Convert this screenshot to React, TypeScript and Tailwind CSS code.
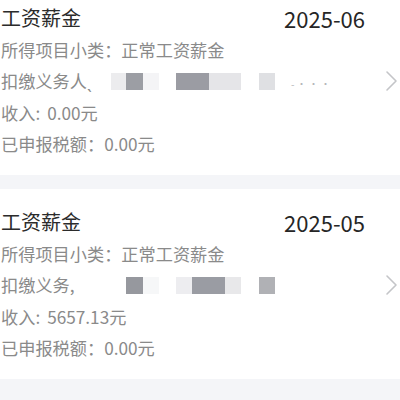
import React from "react";

type Block = { w: number; ml?: number; color: string };

interface RecordCardProps {
  title: string;
  period: string;
  subType: string;
  payer: string;
  blocks: Block[];
  tail?: string;
  income: string;
  declaredTax: string;
}

function Chevron() {
  return (
    <svg width="13" height="22" viewBox="0 0 13 22" className="shrink-0" fill="none">
      <path d="M2 2 L11 11 L2 20" stroke="#c4c5c8" strokeWidth="1.6" strokeLinecap="round" strokeLinejoin="round" />
    </svg>
  );
}

function RecordCard({ title, period, subType, payer, blocks, tail, income, declaredTax }: RecordCardProps) {
  return (
    <div className="bg-white h-[190px] pt-[17px] pl-[1px] flex flex-col">
      {/* title + period */}
      <div className="flex items-center justify-between h-[32px] pr-[35px]">
        <span className="text-[20px] text-[#2b2b2b]">{title}</span>
        <span className="text-[22px] text-[#262626]">{period}</span>
      </div>

      <div className="h-[31.5px] flex items-center text-[17.2px] text-[#8a8a8a]">所得项目小类：{subType}</div>

      {/* payer row with masked name */}
      <div className="h-[31.5px] flex items-center text-[17.2px] text-[#8a8a8a] pr-[2px]">
        <span className="w-[109px] shrink-0 whitespace-nowrap">{payer}</span>
        {blocks.map((b, i) => (
          <span
            key={i}
            className="h-[17px] shrink-0 inline-block"
            style={{ width: b.w, marginLeft: b.ml ?? 0, backgroundColor: b.color }}
          />
        ))}
        {tail && <span className="ml-[16px] text-[10px] leading-none text-[#b5b6b9] tracking-[2px] mt-[6px]">{tail}</span>}
        <span className="ml-auto">
          <Chevron />
        </span>
      </div>

      <div className="h-[31.5px] flex items-center text-[17.2px] text-[#8a8a8a]">
        <span>收入:</span>
        <span className="ml-[7px]">{income}</span>
      </div>
      <div className="h-[31.5px] flex items-center text-[17.2px] text-[#8a8a8a]">已申报税额：{declaredTax}</div>
    </div>
  );
}

export default function App() {
  const records: RecordCardProps[] = [
    {
      title: "工资薪金",
      period: "2025-06",
      subType: "正常工资薪金",
      payer: "扣缴义务人\u02CE",
      blocks: [
        { w: 15, ml: 1, color: "#ececee" },
        { w: 17, color: "#9c9ea4" },
        { w: 16, color: "#f4f4f6" },
        { w: 33, ml: 17, color: "#9b9ca3" },
        { w: 32, color: "#e5e5e8" },
        { w: 16, ml: 18, color: "#dfe0e3" },
      ],
      tail: "-···",
      income: "0.00元",
      declaredTax: "0.00元",
    },
    {
      title: "工资薪金",
      period: "2025-05",
      subType: "正常工资薪金",
      payer: "扣缴义务,",
      blocks: [
        { w: 17, ml: 16, color: "#96989e" },
        { w: 16, color: "#f6f7f8" },
        { w: 16, ml: 17, color: "#ededf0" },
        { w: 33, color: "#9a9ca3" },
        { w: 16, color: "#e8e8ea" },
        { w: 16, ml: 18, color: "#b0b1b5" },
      ],
      income: "5657.13元",
      declaredTax: "0.00元",
    },
  ];

  return (
    <div
      className="w-[400px] h-[400px] overflow-hidden bg-[#f4f5f8]"
      style={{ fontFamily: '"Noto Sans CJK SC", "Noto Sans", sans-serif' }}
    >
      <div className="-mt-[15px] flex flex-col gap-[14px]">
        {records.map((r) => (
          <RecordCard key={r.period} {...r} />
        ))}
      </div>
    </div>
  );
}
